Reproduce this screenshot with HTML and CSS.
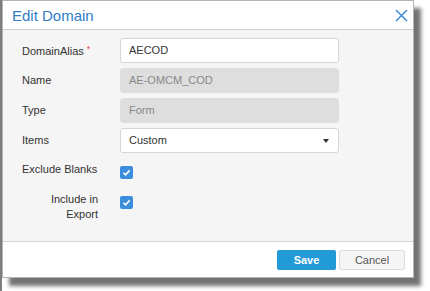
FILE: index.html
```html
<!DOCTYPE html>
<html>
<head>
    <meta charset="UTF-8">
    <title>Edit Domain</title>
    <link rel="stylesheet" href="styles.css">
</head>
<body>

<div class="dialog">
    <div class="dialog-head">
        <span class="dialog-title">Edit Domain</span>
        <a href="javascript:;" class="close">
            <svg width="13" height="13" viewBox="0 0 13 13"><path d="M1 1 L12 12 M12 1 L1 12" stroke="#3f8ad6" stroke-width="1.5" fill="none"/></svg>
        </a>
    </div>
    <div class="dialog-body">
        <div class="row">
            <label class="lbl">DomainAlias <span class="req">*</span></label>
            <div class="field">AECOD</div>
        </div>
        <div class="row">
            <label class="lbl">Name</label>
            <div class="field disabled">AE-OMCM_COD</div>
        </div>
        <div class="row">
            <label class="lbl">Type</label>
            <div class="field disabled">Form</div>
        </div>
        <div class="row">
            <label class="lbl">Items</label>
            <div class="field select">Custom<span class="caret"></span></div>
        </div>
        <div class="row check-row">
            <label class="lbl">Exclude Blanks</label>
            <span class="check"><svg width="13" height="13" viewBox="0 0 13 13"><path d="M3.5 6.8 L5.6 8.8 L9.6 4.4" stroke="#fff" stroke-width="1.6" fill="none"/></svg></span>
        </div>
        <div class="row check-row">
            <label class="lbl right">Include in Export</label>
            <span class="check"><svg width="13" height="13" viewBox="0 0 13 13"><path d="M3.5 6.8 L5.6 8.8 L9.6 4.4" stroke="#fff" stroke-width="1.6" fill="none"/></svg></span>
        </div>
    </div>
    <div class="dialog-foot">
        <a href="javascript:;" class="btn btn-save">Save</a>
        <a href="javascript:;" class="btn btn-cancel">Cancel</a>
    </div>
</div>

</body>
</html>
```

FILE: styles.css
```css
*{ margin: 0; padding: 0; box-sizing: border-box; text-decoration: none;}
body { font-family: "Liberation Sans", Arial, sans-serif; background: linear-gradient(to right, #7d7d7d 0, #7d7d7d 2px, #fff 2px); padding: 0 0 0 2px; height: 291px; overflow: hidden;}
.dialog { width: 412px; margin-top: 0; background: #fff; border: 1px solid #b5b5b5; box-shadow: 7px 8px 4px rgba(0,0,0,.55);}
.dialog-head { height: 29px; display: flex; align-items: center; justify-content: space-between; padding: 0 5px 0 9px; border-bottom: 1px solid #cfcfcf;}
.dialog-title { font-size: 15px; color: #2f7cc7;}
.close { display: flex; padding-top: 1px;}
.dialog-body { background: #f5f5f5; padding: 8px 0 19px 19px; display: flex; flex-direction: column; gap: 5px; border-bottom: 1px solid #d4d4d4;}
.row { display: flex; align-items: center; min-height: 25px;}
.lbl { width: 98px; font-size: 11px; color: #333; line-height: 15px;}
.lbl.right { text-align: right; padding-right: 22px;}
.req { color: #e04848; font-size: 9px; vertical-align: 3px;}
.field { width: 219px; height: 25px; background: #fff; border: 1px solid #d6d6d6; border-radius: 3px; font-size: 11px; color: #333; line-height: 23px; padding-left: 8px; position: relative;}
.field.disabled { background: #dedede; border-color: #dedede; color: #888;}
.caret { position: absolute; right: 9px; top: 10px; border-left: 3px solid transparent; border-right: 3px solid transparent; border-top: 4px solid #333;}
.check-row { align-items: flex-start;}
.check-row .lbl { padding-top: 4px;}
.check { display: block; width: 13px; height: 13px; margin-top: 8px; background: #3c8ddb; border-radius: 2px;}
.check svg { display: block;}
.dialog-foot { height: 35px; display: flex; justify-content: flex-end; align-items: flex-start; padding: 8px 8px 0 0; gap: 3px;}
.btn { height: 20px; line-height: 20px; font-size: 11px; text-align: center; border-radius: 2px;}
.btn-save { width: 59px; background: #229ad8; color: #fff; font-weight: bold;}
.btn-cancel { width: 66px; background: #f5f5f6; border: 1px solid #dcdce0; color: #555; line-height: 18px;}
```
